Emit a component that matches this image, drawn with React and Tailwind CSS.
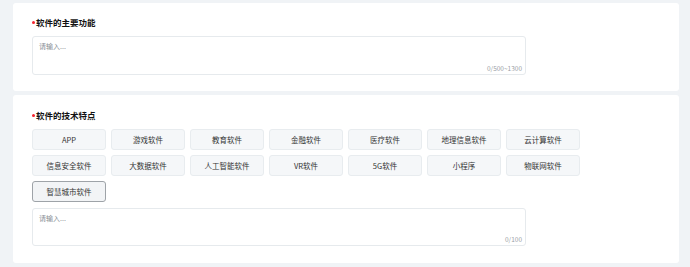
import { useState } from "react";

const tags = [
  "APP",
  "游戏软件",
  "教育软件",
  "金融软件",
  "医疗软件",
  "地理信息软件",
  "云计算软件",
  "信息安全软件",
  "大数据软件",
  "人工智能软件",
  "VR软件",
  "5G软件",
  "小程序",
  "物联网软件",
  "智慧城市软件",
];

function Title({ children }) {
  return (
    <div className="flex items-center h-[12px] text-[8.5px] font-bold text-[#111]">
      <span className="w-[3px] h-[3px] rounded-full bg-[#f5222d] mr-[1px]" />
      {children}
    </div>
  );
}

function Box({ counter, height }) {
  return (
    <div
      className={`relative w-[494px] ${height} bg-white border border-[#e6eaed] rounded-[3px] px-[6px] py-[4px]`}
    >
      <p className="text-[7px] text-[#8a8f96] leading-[10px]">请输入...</p>
      <span className="absolute right-[3px] bottom-[1px] text-[6.5px] text-[#9aa0a6] leading-[9px]">
        {counter}
      </span>
    </div>
  );
}

export default function App() {
  const [active] = useState("智慧城市软件");

  return (
    <div
      className="h-[267px] bg-[#f0f3f6] pl-[13px] pr-[11px] pt-[3px] flex flex-col gap-[4px]"
      style={{ fontFamily: '"Noto Sans CJK SC", "Noto Sans", sans-serif' }}
    >
      {/* 主要功能 */}
      <section className="bg-white rounded-[3px] h-[88px] pl-[19px] pt-[13px]">
        <Title>软件的主要功能</Title>
        <div className="mt-[8px]">
          <Box counter="0/500~1300" height="h-[39px]" />
        </div>
      </section>

      {/* 技术特点 */}
      <section className="bg-white rounded-[3px] h-[168px] pl-[19px] pt-[14px]">
        <Title>软件的技术特点</Title>
        <div className="mt-[8px] grid grid-cols-[repeat(7,74px)] gap-x-[5px] gap-y-[5px]">
          {tags.map((t) => (
            <button
              key={t}
              className={`h-[21px] rounded-[3px] text-[7.5px] text-[#333] flex items-center justify-center ${
                t === active
                  ? "border border-[#9ea3a8] bg-[#f2f4f6]"
                  : "border border-[#e8ecef] bg-[#f5f7f9]"
              }`}
            >
              {t}
            </button>
          ))}
        </div>
        <div className="mt-[6px]">
          <Box counter="0/100" height="h-[38px]" />
        </div>
      </section>
    </div>
  );
}
